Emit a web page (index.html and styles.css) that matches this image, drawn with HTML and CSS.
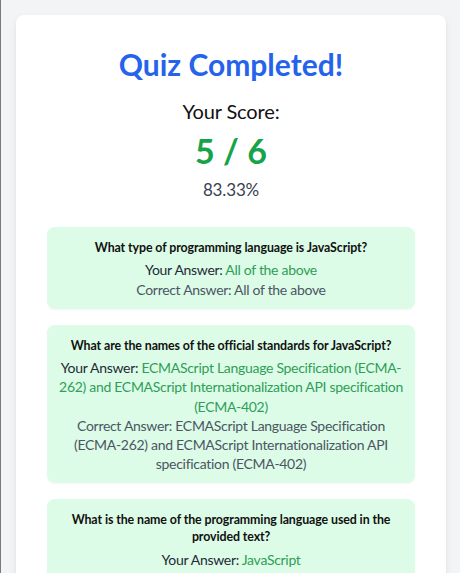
FILE: index.html
```html
<!DOCTYPE html>
<html lang="en">
<head>
<meta charset="utf-8">
<title>Quiz Completed</title>
<link rel="stylesheet" href="styles.css">
</head>
<body>
<main class="card">
  <h1 class="title">Quiz Completed!</h1>
  <p class="score-label">Your Score:</p>
  <p class="score">5 / 6</p>
  <p class="percent">83.33%</p>
  <section class="results">
    <div class="result">
      <p class="question">What type of programming language is JavaScript?</p>
      <p class="answer">Your Answer: <span class="given">All of the above</span></p>
      <p class="correct">Correct Answer: All of the above</p>
    </div>
    <div class="result">
      <p class="question">What are the names of the official standards for JavaScript?</p>
      <p class="answer">Your Answer: <span class="given">ECMAScript Language Specification (ECMA-262) and ECMAScript Internationalization API specification (ECMA-402)</span></p>
      <p class="correct">Correct Answer: ECMAScript Language Specification (ECMA-262) and ECMAScript Internationalization API specification (ECMA-402)</p>
    </div>
    <div class="result">
      <p class="question">What is the name of the programming language used in the provided text?</p>
      <p class="answer">Your Answer: <span class="given">JavaScript</span></p>
      <p class="correct">Correct Answer: JavaScript</p>
    </div>
  </section>
</main>
</body>
</html>
```
FILE: styles.css
```css
* { box-sizing: border-box; }
html, body { margin: 0; }
body {
  background: #f3f4f6;
  border-left: 1px solid #7a7a7a;
  padding: 15px 14px 0 15px;
  font-family: "Lato", "Noto Sans", sans-serif;
  color: #111827;
  min-height: 573px;
}
p { margin: 0; }
.card {
  background: #fff;
  border-radius: 8px;
  box-shadow: 0 4px 10px rgba(0,0,0,0.06), 0 1px 3px rgba(0,0,0,0.05);
  padding: 31px 31px 40px;
  text-align: center;
}
.title {
  margin: 0;
  font-size: 30px;
  line-height: 36px;
  font-weight: 700;
  color: #2563eb;
}
.score-label {
  margin-top: 15px;
  font-size: 20px;
  line-height: 28px;
  letter-spacing: -0.15px;
  color: #111;
}
.score {
  margin-top: 6px;
  font-size: 34px;
  line-height: 40px;
  font-weight: 700;
  color: #16a34a;
}
.percent {
  margin-top: 7px;
  font-size: 17px;
  line-height: 24px;
  letter-spacing: -0.15px;
  color: #374151;
}
.results {
  margin-top: 25px;
  display: flex;
  flex-direction: column;
  gap: 16px;
}
.result {
  background: #dcfce7;
  border-radius: 8px;
  padding: 12px 10px 10px;
  box-shadow: 0 1px 2px rgba(0,0,0,0.04);
}
.question {
  font-size: 12.4px;
  line-height: 17px;
  font-weight: 700;
  letter-spacing: -0.1px;
  color: #111;
  margin-bottom: 4.4px;
}
.answer, .correct {
  font-size: 14px;
  line-height: 19.2px;
  letter-spacing: -0.3px;
}
.answer { color: #1f2937; }
.given { color: #2f9e58; }
.correct { color: #4b5563; }
```
